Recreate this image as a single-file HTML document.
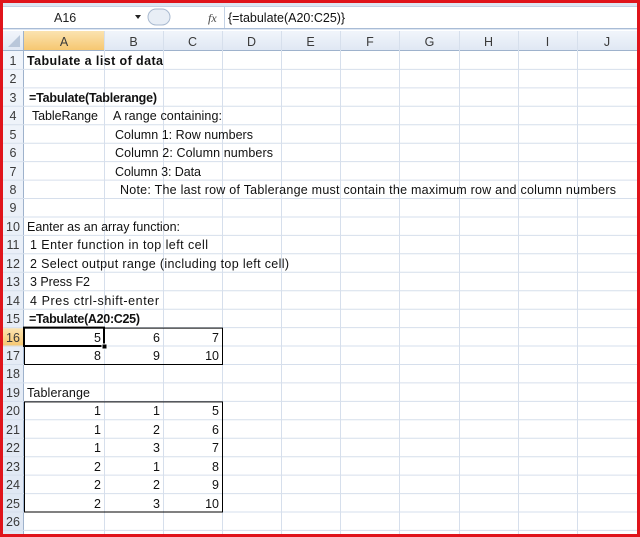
<!DOCTYPE html>
<html><head><meta charset="utf-8"><style>
html,body{margin:0;padding:0;background:#fff;}
svg{display:block;font-family:"Liberation Sans",Arial,sans-serif;}
</style></head><body>
<svg width="640" height="537" viewBox="0 0 640 537" xmlns="http://www.w3.org/2000/svg">
<defs>
<linearGradient id="hd" x1="0" y1="0" x2="0" y2="1"><stop offset="0" stop-color="#f1f5fb"/><stop offset="1" stop-color="#dfe7f3"/></linearGradient>
<linearGradient id="hs" x1="0" y1="0" x2="0" y2="1"><stop offset="0" stop-color="#fbe3b0"/><stop offset="1" stop-color="#f6c66e"/></linearGradient>
</defs>
<rect width="640" height="537" fill="#fff"/>
<rect x="3" y="3" width="634" height="27" fill="#dde6f2"/>
<rect x="3" y="6" width="634" height="22" fill="#fff"/>
<line x1="3" y1="28.5" x2="637" y2="28.5" stroke="#a9bcd6"/>
<line x1="3" y1="6.5" x2="637" y2="6.5" stroke="#c4d2e5"/>
<text x="54" y="22" font-size="12.5" fill="#222">A16</text>
<path d="M135 15 l6 0 l-3 4z" fill="#222"/>
<path d="M156 9 a8 8 0 0 0 0 16 h6 a8 8 0 0 0 0 -16z" fill="#e8eef6" stroke="#a9bad0"/>
<text x="208" y="22" font-size="12" font-style="italic" font-family="Liberation Serif,serif" fill="#444">fx</text>
<line x1="224.5" y1="7" x2="224.5" y2="28" stroke="#c4d2e5"/>
<text x="228" y="22" font-size="12.5" fill="#111">{=tabulate(A20:C25)}</text>
<rect x="3" y="31" width="634" height="20" fill="url(#hd)"/>
<rect x="3" y="51" width="21" height="483" fill="url(#hd)"/>
<rect x="24" y="31" width="80" height="20" fill="url(#hs)"/>
<rect x="3" y="328.2" width="21" height="18.4" fill="url(#hs)"/>
<path d="M8 47 L20 35 L20 47Z" fill="#b9c7da"/>
<g stroke="#9eb2cc" stroke-width="1">
<line x1="3" y1="50.5" x2="637" y2="50.5"/>
<line x1="23.5" y1="31" x2="23.5" y2="534"/>
</g>
<g font-size="12.5" fill="#3a3a3a" text-anchor="middle">
<text x="64" y="46">A</text><text x="133.5" y="46">B</text><text x="192.5" y="46">C</text><text x="251.5" y="46">D</text><text x="310.5" y="46">E</text><text x="370" y="46">F</text><text x="429.5" y="46">G</text><text x="488.5" y="46">H</text><text x="547.5" y="46">I</text><text x="607" y="46">J</text>
</g>
<g stroke="#d6dfec" stroke-width="1">
<line x1="104.5" y1="31" x2="104.5" y2="534"/><line x1="163.5" y1="31" x2="163.5" y2="534"/><line x1="222.5" y1="31" x2="222.5" y2="534"/><line x1="281.5" y1="31" x2="281.5" y2="534"/><line x1="340.5" y1="31" x2="340.5" y2="534"/><line x1="399.5" y1="31" x2="399.5" y2="534"/><line x1="459.5" y1="31" x2="459.5" y2="534"/><line x1="518.5" y1="31" x2="518.5" y2="534"/><line x1="577.5" y1="31" x2="577.5" y2="534"/>
</g>
<g stroke="#d6dfec" stroke-width="1">
<line x1="3" y1="69.4" x2="637" y2="69.4"/><line x1="3" y1="87.9" x2="637" y2="87.9"/><line x1="3" y1="106.3" x2="637" y2="106.3"/><line x1="3" y1="124.8" x2="637" y2="124.8"/><line x1="3" y1="143.2" x2="637" y2="143.2"/><line x1="3" y1="161.6" x2="637" y2="161.6"/><line x1="3" y1="180.1" x2="637" y2="180.1"/><line x1="3" y1="198.5" x2="637" y2="198.5"/><line x1="3" y1="217" x2="637" y2="217"/><line x1="3" y1="235.4" x2="637" y2="235.4"/><line x1="3" y1="253.8" x2="637" y2="253.8"/><line x1="3" y1="272.3" x2="637" y2="272.3"/><line x1="3" y1="290.7" x2="637" y2="290.7"/><line x1="3" y1="309.2" x2="637" y2="309.2"/><line x1="3" y1="327.6" x2="637" y2="327.6"/><line x1="3" y1="346" x2="637" y2="346"/><line x1="3" y1="364.5" x2="637" y2="364.5"/><line x1="3" y1="382.9" x2="637" y2="382.9"/><line x1="3" y1="401.4" x2="637" y2="401.4"/><line x1="3" y1="419.8" x2="637" y2="419.8"/><line x1="3" y1="438.2" x2="637" y2="438.2"/><line x1="3" y1="456.7" x2="637" y2="456.7"/><line x1="3" y1="475.1" x2="637" y2="475.1"/><line x1="3" y1="493.6" x2="637" y2="493.6"/><line x1="3" y1="512" x2="637" y2="512"/><line x1="3" y1="530.4" x2="637" y2="530.4"/>
</g>
<g font-size="12.5" fill="#3a3a3a" text-anchor="middle">
<text x="13" y="65">1</text><text x="13" y="83">2</text><text x="13" y="102">3</text><text x="13" y="120">4</text><text x="13" y="139">5</text><text x="13" y="157">6</text><text x="13" y="176">7</text><text x="13" y="194">8</text><text x="13" y="212">9</text><text x="13" y="231">10</text><text x="13" y="249">11</text><text x="13" y="268">12</text><text x="13" y="286">13</text><text x="13" y="305">14</text><text x="13" y="323">15</text><text x="13" y="342">16</text><text x="13" y="360">17</text><text x="13" y="378">18</text><text x="13" y="397">19</text><text x="13" y="415">20</text><text x="13" y="434">21</text><text x="13" y="452">22</text><text x="13" y="471">23</text><text x="13" y="489">24</text><text x="13" y="508">25</text><text x="13" y="526">26</text>
</g>
<g font-size="12.5" fill="#111">
<text x="27" y="65" font-weight="bold" textLength="136">Tabulate a list of data</text>
<text x="29" y="102" font-weight="bold" textLength="128">=Tabulate(Tablerange)</text>
<text x="32" y="120" textLength="66">TableRange</text>
<text x="113" y="120" textLength="109">A range containing:</text>
<text x="115" y="139" textLength="138">Column 1: Row numbers</text>
<text x="115" y="157" textLength="158">Column 2: Column numbers</text>
<text x="115" y="176" textLength="86">Column 3: Data</text>
<text x="120" y="194" textLength="496">Note:  The last row of Tablerange must contain the maximum row and column numbers</text>
<text x="27" y="231" textLength="153">Eanter as an array function:</text>
<text x="30" y="249" textLength="178">1  Enter function in top left cell</text>
<text x="30" y="268" textLength="259">2  Select output range (including top left cell)</text>
<text x="30" y="286" textLength="60">3  Press F2</text>
<text x="30" y="305" textLength="129">4  Pres  ctrl-shift-enter</text>
<text x="29" y="323" font-weight="bold" textLength="111">=Tabulate(A20:C25)</text>
<text x="27" y="397" textLength="63">Tablerange</text>
</g>
<g font-size="12.5" fill="#111" text-anchor="end">
<text x="101" y="342">5</text><text x="160" y="342">6</text><text x="219" y="342">7</text>
<text x="101" y="360">8</text><text x="160" y="360">9</text><text x="219" y="360">10</text>
<text x="101" y="415">1</text><text x="160" y="415">1</text><text x="219" y="415">5</text>
<text x="101" y="434">1</text><text x="160" y="434">2</text><text x="219" y="434">6</text>
<text x="101" y="452">1</text><text x="160" y="452">3</text><text x="219" y="452">7</text>
<text x="101" y="471">2</text><text x="160" y="471">1</text><text x="219" y="471">8</text>
<text x="101" y="489">2</text><text x="160" y="489">2</text><text x="219" y="489">9</text>
<text x="101" y="508">2</text><text x="160" y="508">3</text><text x="219" y="508">10</text>
</g>
<g fill="none" stroke="#000" stroke-width="1">
<rect x="24.5" y="328.1" width="198" height="36.4"/>
<rect x="24.5" y="401.9" width="198" height="110.1"/>
</g>
<rect x="24" y="327.6" width="80" height="18.4" fill="none" stroke="#000" stroke-width="2"/>
<rect x="102" y="344" width="5" height="5" fill="#000" stroke="#fff" stroke-width="1"/>
<rect x="1.5" y="1.5" width="637" height="534" fill="none" stroke="#e0141b" stroke-width="3"/>
</svg>
</body></html>
